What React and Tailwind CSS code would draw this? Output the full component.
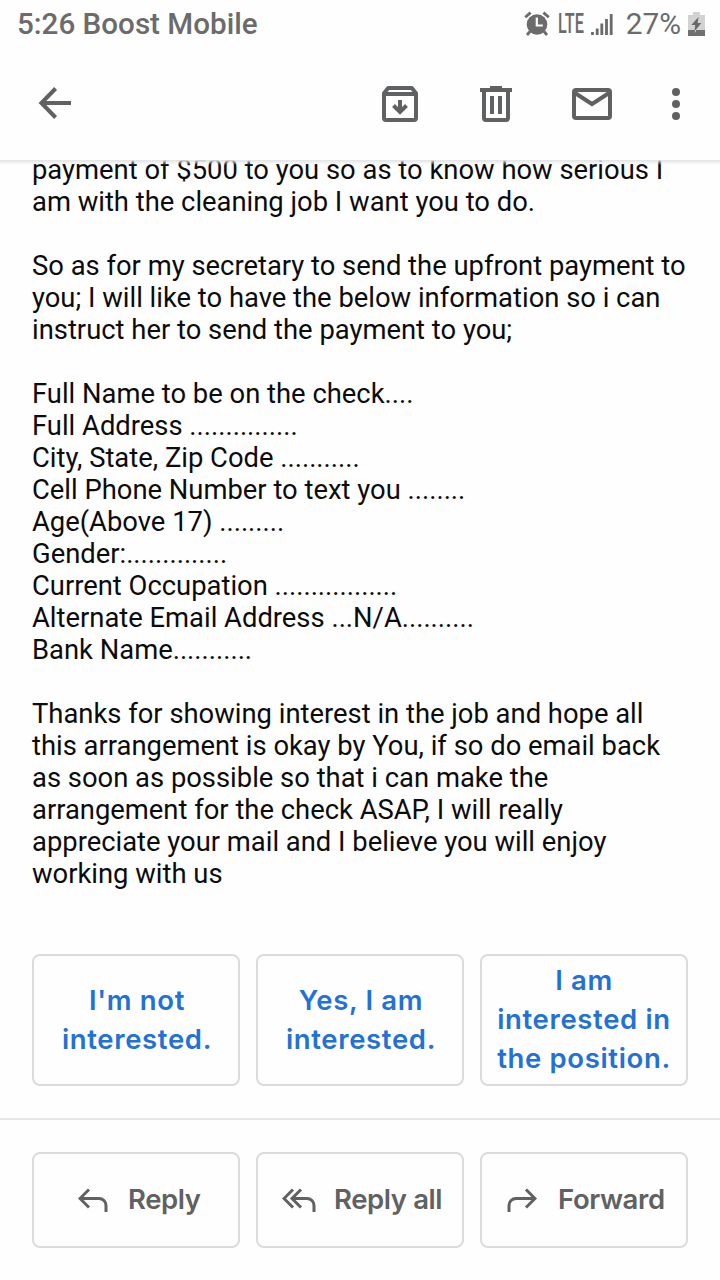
import React from 'react';

const BODY_LINES = [
  { text: 'payment of $500 to you so as to know how serious I' },
  { text: 'am with the cleaning job I want you to do.' },
  { text: '' },
  { text: 'So as for my secretary to send the upfront payment to' },
  { text: 'you; I will like to have the below information so i can' },
  { text: 'instruct her to send the payment to you;' },
  { text: '' },
  { text: 'Full Name to be on the check....' },
  { text: 'Full Address ...............' },
  { text: 'City, State, Zip Code ...........' },
  { text: 'Cell Phone Number to text you ........' },
  { text: 'Age(Above 17) .........' },
  { text: 'Gender:..............' },
  { text: 'Current Occupation .................' },
  { text: 'Alternate Email Address ...N/A..........' },
  { text: 'Bank Name...........' },
  { text: '' },
  { text: 'Thanks for showing interest in the job and hope all' },
  { text: 'this arrangement is okay by You, if so do email back' },
  { text: 'as soon as possible so that i can make the' },
  { text: 'arrangement for the check ASAP, I will really' },
  { text: 'appreciate your mail and I believe you will enjoy' },
  { text: 'working with us' },
];

const SUGGESTIONS = [
  ["I'm not", 'interested.'],
  ['Yes, I am', 'interested.'],
  ['I am', 'interested in', 'the position.'],
];

function StatusBar() {
  return (
    <div className="flex h-12 items-center pl-[17px] pr-[15px] text-[#6b6b6b]">
      <span className="text-[29.6px] font-medium leading-12">5:26 Boost Mobile</span>
      <div className="ml-auto flex h-full items-center">
        {/* Alarm */}
        <svg width="26" height="26" viewBox="0 0 26 26" className="mr-[8px]">
          <circle cx="13" cy="13.5" r="10.3" fill="currentColor" />
          <path d="M1.2 6.2 6.6 1.6M24.8 6.2 19.4 1.6M6 20.5 3 24M20 20.5l3 3.5" stroke="currentColor" strokeWidth="2.8" fill="none" />
          <path d="M12.8 6.5v8h6" stroke="#fff" strokeWidth="2.2" fill="none" />
        </svg>
        <span className="w-[25px]">
          <span className="block origin-left scale-x-[0.59] whitespace-nowrap text-[27.5px] font-medium leading-12">LTE</span>
        </span>
        {/* Signal */}
        <svg width="22" height="24" viewBox="0 0 22 24" className="ml-[8px] mr-[13px]">
          <path d="M1.5 20v3M6.2 16.5V23M10.8 11.5V23M15.5 7v16M20.2 2v21" stroke="currentColor" strokeWidth="2.8" fill="none" />
        </svg>
        <span className="text-[29.8px] leading-12">27%</span>
        {/* Battery */}
        <svg width="17" height="24" viewBox="0 0 17 24" className="ml-[7px]">
          <path d="M5 0h7v3h5v21H0V3h5z" fill="#d2d2d2" />
          <path d="M0 18h17v6H0z" fill="#707070" />
          <path d="M10.5 5 3.3 13h3.9l-.7 6.5L13.3 11H9.6z" fill="#686868" />
          <path d="M7 18h1l-1.2 3.2z" fill="#fff" />
        </svg>
      </div>
    </div>
  );
}

function Toolbar() {
  return (
    <div className="flex h-28 items-center pl-[38px] pr-[40px] text-[#5f6163]">
      <svg width="34" height="34" viewBox="0 0 34 34" fill="none" stroke="currentColor" strokeWidth="4" className="mb-[2px]">
        <path d="M33 17H4M17.6 2.5 3.4 17l14.2 14.5" />
      </svg>
      {/* Archive */}
      <svg width="36" height="36" viewBox="0 0 36 36" fill="none" stroke="currentColor" strokeWidth="4" className="ml-auto">
        <path d="M6.2 2h23.6L34 7.2V32a2 2 0 0 1-2 2H4a2 2 0 0 1-2-2V7.2z" strokeLinejoin="round" />
        <path d="M2 8h32M18 14v11M11.5 19.5 18 26l6.5-6.5" />
      </svg>
      {/* Delete */}
      <svg width="32" height="36" viewBox="0 0 32 36" fill="none" stroke="currentColor" strokeWidth="4" className="ml-[62px]">
        <path d="M0 4h32M10 2h12M12 10v18M20 10v18" />
        <path d="M4 4v28a2 2 0 0 0 2 2h20a2 2 0 0 0 2-2V4" />
      </svg>
      {/* Mark unread */}
      <svg width="40" height="32" viewBox="0 0 40 32" fill="none" stroke="currentColor" strokeWidth="4" className="ml-[60px]">
        <rect x="2" y="2" width="36" height="28" rx="2" />
        <path d="M3 5l17 11L37 5" />
      </svg>
      <svg width="8" height="32" viewBox="0 0 8 32" fill="currentColor" className="ml-[60px]">
        <circle cx="4" cy="4" r="4" />
        <circle cx="4" cy="16" r="4" />
        <circle cx="4" cy="28" r="4" />
      </svg>
    </div>
  );
}

function ReplyIcon() {
  return (
    <svg width="30" height="24" viewBox="0 0 30 24" fill="none" stroke="currentColor" strokeWidth="3">
      <path d="M11 1.5 2 10.5l9 9M2 10.5h19a7 7 0 0 1 7 7V24" />
    </svg>
  );
}

function ReplyAllIcon() {
  return (
    <svg width="34" height="24" viewBox="0 0 34 24" fill="none" stroke="currentColor" strokeWidth="3">
      <path d="M11 1.5 2 10.5l9 9M19 1.5l-9 9 9 9M10 10.5h15a7 7 0 0 1 7 7V24" />
    </svg>
  );
}

function ForwardIcon() {
  return (
    <svg width="30" height="24" viewBox="0 0 30 24" fill="none" stroke="currentColor" strokeWidth="3">
      <path d="M19 1.5l9 9-9 9M28 10.5H9a7 7 0 0 0-7 7V24" />
    </svg>
  );
}

export default function App() {
  return (
    <div className="flex h-[1280px] w-[720px] flex-col overflow-hidden bg-[#fefefe] font-['Roboto',sans-serif]">
      <header className="relative z-10 h-40 shrink-0 bg-[#fefefe]">
        <StatusBar />
        <Toolbar />
        {/* Soft edge where the message scrolls under */}
        <div className="absolute inset-x-0 top-full h-[5px] bg-linear-to-b from-[#e2e4e4] to-[#fefefe]/0" />
      </header>

      {/* Message body, scrolled partly under the header */}
      <main className="-mt-[6px] h-[800px] shrink-0 pl-8 text-[27.38px] leading-8 text-[#0c0c0c]">
        {BODY_LINES.map((line, i) => (
          <p key={i} className="h-8 whitespace-nowrap">{line.text}</p>
        ))}
      </main>

      <div className="grid h-[132px] shrink-0 grid-cols-3 gap-4 px-8">
        {SUGGESTIONS.map((lines, i) => (
          <button
            key={i}
            className={`flex flex-col items-center justify-center rounded-lg border-2 border-[#dadcdc] font-['Inter',sans-serif] text-[27.5px] font-semibold leading-[39px] tracking-[0.65px] text-[#2371d6] ${lines.length > 2 ? 'pb-[2px]' : 'pl-[2px]'}`}
          >
            {lines.map((l) => (
              <span key={l} className="whitespace-nowrap">{l}</span>
            ))}
          </button>
        ))}
      </div>

      <footer className="mt-8 grid h-[162px] shrink-0 grid-cols-3 gap-4 border-t-2 border-[#e6e7e7] px-8 pt-8 pb-[32px] font-['Inter',sans-serif] text-[27.5px] font-semibold tracking-[-0.4px] text-[#5f6163]">
        <button className="flex h-24 items-center rounded-lg border-2 border-[#dadcdc] pl-[44px]">
          <ReplyIcon />
          <span className="ml-[20px] whitespace-nowrap">Reply</span>
        </button>
        <button className="flex h-24 items-center rounded-lg border-2 border-[#dadcdc] pl-[24px]">
          <ReplyAllIcon />
          <span className="ml-[18px] whitespace-nowrap">Reply all</span>
        </button>
        <button className="flex h-24 items-center rounded-lg border-2 border-[#dadcdc] pl-[25px]">
          <ForwardIcon />
          <span className="ml-[21px] whitespace-nowrap">Forward</span>
        </button>
      </footer>
    </div>
  );
}
